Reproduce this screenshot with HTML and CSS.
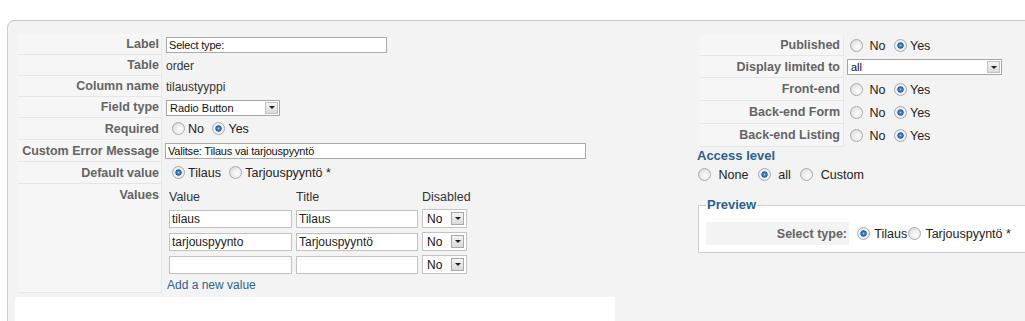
FILE: index.html
```html
<!DOCTYPE html>
<html>
<head>
<meta charset="utf-8">
<title>Element</title>
<link rel="stylesheet" href="styles.css">
</head>
<body>
<div class="panel">
  <div class="col-left">
    <div class="form">
      <div class="row"><div class="key">Label</div><div class="val"><div class="tb w-label">Select type:</div></div></div>
      <div class="row"><div class="key">Table</div><div class="val">order</div></div>
      <div class="row"><div class="key">Column name</div><div class="val">tilaustyyppi</div></div>
      <div class="row"><div class="key">Field type</div><div class="val"><div class="sel w-ft"><span>Radio Button</span><span class="arrow"></span></div></div></div>
      <div class="row h22"><div class="key">Required</div><div class="val"><span class="radios left"><span class="rd"></span>No <span class="rd on"></span>Yes</span></div></div>
      <div class="row h22"><div class="key">Custom Error Message</div><div class="val"><div class="tb w-err">Valitse: Tilaus vai tarjouspyyntö</div></div></div>
      <div class="row h22"><div class="key">Default value</div><div class="val"><span class="radios left"><span class="rd on"></span>Tilaus <span class="rd"></span>Tarjouspyyntö *</span></div></div>
      <div class="row values"><div class="key">Values</div>
        <div class="val">
          <div class="vgrid">
            <div class="vh">Value</div><div class="vh">Title</div><div class="vh">Disabled</div>
            <div class="vi">tilaus</div><div class="vi">Tilaus</div><div class="sel small"><span>No</span><span class="arrow"></span></div>
            <div class="vi">tarjouspyynto</div><div class="vi">Tarjouspyyntö</div><div class="sel small"><span>No</span><span class="arrow"></span></div>
            <div class="vi"></div><div class="vi"></div><div class="sel small"><span>No</span><span class="arrow"></span></div>
          </div>
          <a class="addlink">Add a new value</a>
        </div>
      </div>
    </div>
    <div class="whitebox"></div>
  </div>
  <div class="col-right">
    <div class="form right">
      <div class="row"><div class="key">Published</div><div class="val"><span class="radios"><span class="rd"></span> No <span class="rd on"></span>Yes</span></div></div>
      <div class="row h22"><div class="key">Display limited to</div><div class="val"><div class="sel w-dl"><span>all</span><span class="arrow"></span></div></div></div>
      <div class="row h23"><div class="key">Front-end</div><div class="val"><span class="radios"><span class="rd"></span> No <span class="rd on"></span>Yes</span></div></div>
      <div class="row h23"><div class="key">Back-end Form</div><div class="val"><span class="radios"><span class="rd"></span> No <span class="rd on"></span>Yes</span></div></div>
      <div class="row h23"><div class="key">Back-end Listing</div><div class="val"><span class="radios"><span class="rd"></span> No <span class="rd on"></span>Yes</span></div></div>
    </div>
    <div class="heading">Access level</div>
    <div class="access"><span class="rd first"></span> None <span class="rd on"></span> all <span class="rd"></span> Custom</div>
    <fieldset class="preview">
      <legend>Preview</legend>
      <div class="row h23"><div class="key pkey">Select type:</div><div class="val"><span class="radios prev"><span class="rd on"></span> Tilaus<span class="rd second"></span> Tarjouspyyntö *</span></div></div>
    </fieldset>
  </div>
</div>
</body>
</html>
```

FILE: styles.css
```css
html, body {
  margin: 0;
  padding: 0;
  background: #fff;
  overflow: hidden;
}
body {
  font-family: "Liberation Sans", Arial, Helvetica, sans-serif;
  font-size: 12px;
  color: #333;
  width: 1025px;
  height: 321px;
}
.panel {
  margin: 20px 0 0 7px;
  width: 1018px;
  height: 301px;
  box-sizing: border-box;
  overflow: hidden;
  border-top: 1px solid #c6c6c6;
  border-left: 1px solid #cdcdcd;
  border-top-left-radius: 8px;
  background: #f3f3f3;
  padding: 13px 0 0 7px;
  display: flex;
  align-items: flex-start;
}
.col-left {
  width: 600px;
  flex: none;
}
.form {
  margin-left: 3px;
}
.row {
  display: flex;
  height: 21px;
}
.row.h22 { height: 22px; }
.row.h23 { height: 23px; }
.row.values { height: 109px; }
.key {
  flex: none;
  width: 144px;
  box-sizing: border-box;
  border-bottom: 1px solid #e6e6e6;
  border-right: 1px solid #e8e8e8;
  background: #f6f6f6;
  color: #646464;
  font-weight: bold;
  font-size: 12.5px;
  display: flex;
  align-items: center;
  justify-content: flex-end;
  padding-right: 2px;
  white-space: nowrap;
}
.values .key {
  align-items: flex-start;
  padding-top: 4px;
  line-height: 15px;
}
.val {
  flex: 1;
  display: flex;
  align-items: center;
  padding-left: 4px;
  white-space: nowrap;
}
.values .val {
  display: block;
  padding: 3px 0 0 0;
}
.tb {
  box-sizing: border-box;
  height: 16px;
  background: #fff;
  border: 1px solid #a9a9a9;
  font-size: 11px;
  line-height: 14px;
  padding: 0 2px;
  letter-spacing: -0.2px;
  color: #111;
}
.w-label { width: 221px; }
.w-err { width: 421px; margin-left: -1px; }

.sel {
  box-sizing: border-box;
  display: flex;
  align-items: center;
  justify-content: space-between;
  height: 16px;
  background: #fff;
  border: 1px solid #a5a5a5;
  font-size: 11px;
  color: #111;
  padding-left: 3px;
}
.w-ft { width: 114px; }
.w-dl { width: 155px; margin-left: 3px; }
.arrow {
  box-sizing: border-box;
  width: 13px;
  height: 12px;
  margin-right: 1px;
  border: 1px solid #c2c2c2;
  background: linear-gradient(#f4f4f4, #dadada);
  display: flex;
  align-items: center;
  justify-content: center;
}
.arrow::after {
  content: "";
  border-left: 3px solid transparent;
  border-right: 3px solid transparent;
  border-top: 3px solid #222;
}
.sel.small {
  height: 19px;
  font-size: 12px;
  padding-left: 4px;
  border-color: #c4c4c4;
}
.sel.small .arrow {
  width: 13px;
  height: 13px;
  margin-right: 2px;
  border-color: #a8a8a8;
}

.rd {
  display: inline-block;
  width: 13px;
  height: 13px;
  box-sizing: border-box;
  border-radius: 50%;
  border: 1px solid #a6abb0;
  background: radial-gradient(circle at 62% 62%, #fdfdfd 0, #ededed 45%, #d2d2d2 100%);
  vertical-align: -2px;
  margin: 0 3px 0 5px;
}
.rd.on {
  background: radial-gradient(circle at 50% 50%, #9fd0f7 0, #3d86cf 1.3px, #1b5aa0 2.8px, #e4e4e4 3.5px, #f4f4f4 4.3px, #d2d2d2 100%);
}
.radios {
  font-size: 12.5px;
  color: #222;
}
.radios.left .rd { margin-left: 6px; }
.radios.left .rd + .rd { margin-left: 5px; }
.right .val { padding-left: 0; }
.right .radios .rd:first-child { margin-left: 6px; }
.right .key { padding-right: 3px; }

.vgrid {
  margin-left: 7px;
  display: grid;
  grid-template-columns: 123px 122px 45px;
  grid-template-rows: 22px 23px 23px 23px;
  column-gap: 4px;
  align-items: start;
}
.vh {
  padding-top: 3px;
  line-height: 15px;
  font-size: 12.5px;
  color: #333;
}
.vi {
  box-sizing: border-box;
  height: 18px;
  margin-top: 1px;
  background: #fff;
  border: 1px solid #c2c2c2;
  font-size: 12px;
  line-height: 16px;
  padding: 0 2px;
  color: #222;
}
.addlink {
  display: block;
  margin-left: 5px;
  line-height: 15px;
  font-size: 12px;
  color: #2b6496;
}
.whitebox {
  margin-top: 4px;
  height: 40px;
  background: #fff;
  border-top-left-radius: 3px;
}

.col-right {
  flex: 1;
  min-width: 0;
  margin-left: 82px;
  margin-top: 1px;
}
.heading {
  margin-top: 1px;
  font-size: 13px;
  line-height: 16px;
  font-weight: bold;
  color: #2a5f8f;
}
.access {
  font-size: 12.5px;
  line-height: 16px;
  color: #222;
  margin-top: 3px;
  white-space: nowrap;
}
.access .rd { margin: 0 4px 0 6px; }
.access .rd.first { margin-left: 1px; }

.preview {
  margin: 14px -12px 0 1px;
  padding: 9px 7px 7px 7px;
  border: 1px solid #cdcdcd;
  background: #fff;
  min-width: 0;
}
.preview legend {
  padding: 0 1px;
  font-size: 13px;
  line-height: 16px;
  font-weight: bold;
  color: #2a5f8f;
}
.pkey {
  width: 143px;
  border: none;
  background: #f3f3f3;
  font-size: 12.5px;
}
.radios.prev .rd { margin: 0 1px 0 4px; }
.radios.prev .rd.second { margin-left: 1px; }
```
